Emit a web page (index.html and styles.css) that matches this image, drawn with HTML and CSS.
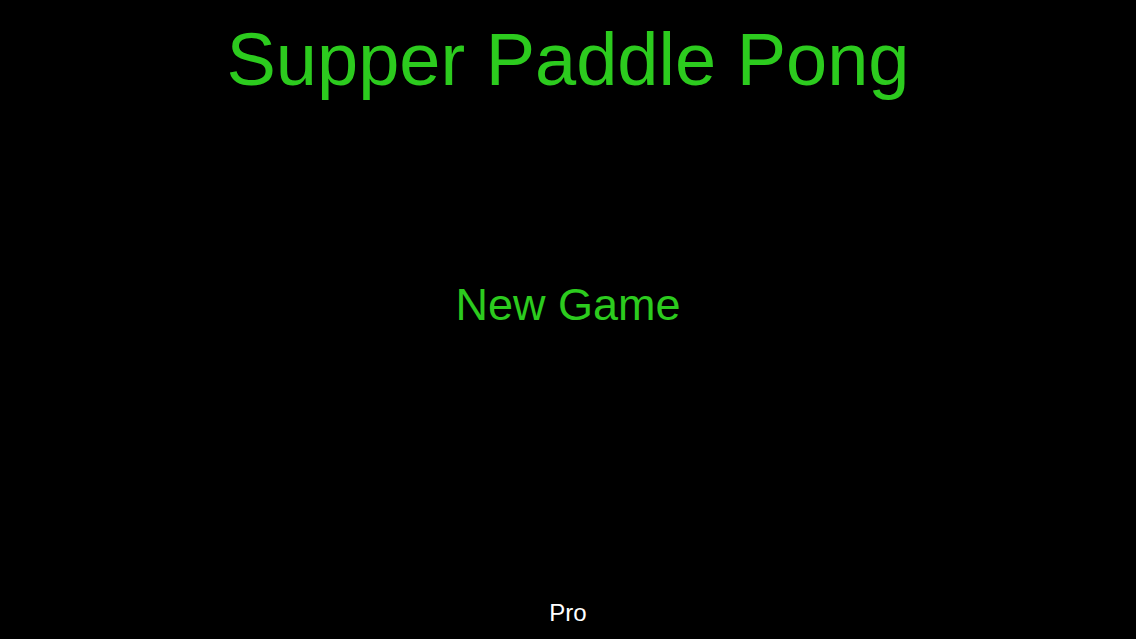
FILE: index.html
```html
<!DOCTYPE html>
<html>
<head>
<meta charset="utf-8">
<link rel="stylesheet" href="styles.css">
</head>
<body>
<main class="screen">
  <h1 class="title">Supper Paddle Pong</h1>
  <div class="menu">
    <button class="menu-btn">New Game</button>
  </div>
  <footer class="footer">
    <button class="pro-btn">Pro</button>
  </footer>
</main>
</body>
</html>
```

FILE: styles.css
```css
html, body {
  margin: 0;
  padding: 0;
  background: #000;
}
.screen {
  width: 1136px;
  height: 639px;
  display: flex;
  flex-direction: column;
  align-items: center;
  font-family: "Liberation Sans", Arial, sans-serif;
  overflow: hidden;
}
.title {
  margin: 0;
  padding-top: 17px;
  font-size: 74px;
  font-weight: normal;
  line-height: 86px;
  color: #2ccb1e;
}
.menu {
  flex: 1;
  display: flex;
  flex-direction: column;
  align-items: center;
  padding-top: 177px;
}
.menu-btn, .pro-btn {
  background: none;
  border: none;
  padding: 0;
  font-family: inherit;
  cursor: pointer;
}
.menu-btn {
  font-size: 45px;
  line-height: 50px;
  color: #2ccb1e;
}
.footer {
  padding-bottom: 12px;
}
.pro-btn {
  font-size: 24px;
  line-height: 28px;
  color: #fff;
}
```
